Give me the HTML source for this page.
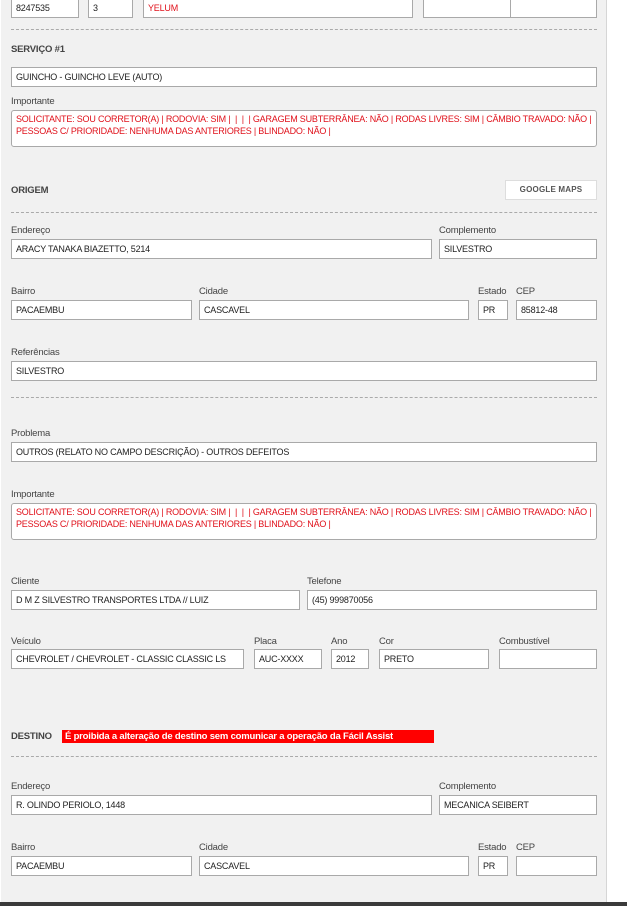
<!DOCTYPE html>
<html><head><meta charset="utf-8"><style>
*{margin:0;padding:0;box-sizing:border-box}
body{width:627px;height:906px;background:#fff;position:relative;overflow:hidden;font-family:"Liberation Sans",Arial,sans-serif;font-size:9px;color:#333;letter-spacing:-0.2px}
.panel{position:absolute;left:1px;top:0;width:606px;height:902px;background:#f1f1f1;border-right:1px solid #d6d6d6}
.bar{position:absolute;left:0;top:902px;width:627px;height:4px;background:#3a3a3a}
.i{position:absolute;height:20px;background:#fff;border:1px solid #a9a9a9;padding-left:4px;line-height:18px;white-space:nowrap;overflow:hidden;color:#222}
.l{position:absolute;color:#444;white-space:nowrap;font-size:9.5px;margin-top:1px}
.h{position:absolute;font-weight:bold;color:#444;white-space:nowrap;font-size:9.5px;margin-top:1px}
.d{position:absolute;left:11px;width:586px;border-top:1px dashed #aaa;height:0}
.ta{position:absolute;left:11px;width:586px;height:37px;background:#fff;border:1px solid #a9a9a9;border-radius:3px;color:#e0101a;padding:2px 4px;line-height:12px}
.red{color:#e0101a}
</style></head><body>
<div class="panel"></div>
<div class="i" style="left:11px;top:-2px;width:68px">8247535</div>
<div class="i" style="left:88px;top:-2px;width:45px">3</div>
<div class="i red" style="left:143px;top:-2px;width:270px">YELUM</div>
<div class="i" style="left:423px;top:-2px;width:88px"></div>
<div class="i" style="left:510px;top:-2px;width:87px"></div>
<div class="d" style="top:29px"></div>
<div class="h" style="left:11px;top:43px">SERVIÇO #1</div>
<div class="i" style="left:11px;top:67px;width:586px">GUINCHO - GUINCHO LEVE (AUTO)</div>
<div class="l" style="left:11px;top:95px">Importante</div>
<div class="ta" style="top:110px">SOLICITANTE: SOU CORRETOR(A) | RODOVIA: SIM | &nbsp;| &nbsp;| &nbsp;| GARAGEM SUBTERRÂNEA: NÃO | RODAS LIVRES: SIM | CÂMBIO TRAVADO: NÃO | PESSOAS C/ PRIORIDADE: NENHUMA DAS ANTERIORES | BLINDADO: NÃO |</div>
<div class="h" style="left:11px;top:184px">ORIGEM</div>
<div style="position:absolute;left:505px;top:180px;width:92px;height:20px;background:#fff;border:1px solid #ddd;font-weight:bold;font-size:8px;color:#555;text-align:center;line-height:18px;letter-spacing:0.2px">GOOGLE MAPS</div>
<div class="d" style="top:212px"></div>
<div class="l" style="left:11px;top:224px">Endereço</div>
<div class="l" style="left:439px;top:224px">Complemento</div>
<div class="i" style="left:11px;top:239px;width:421px">ARACY TANAKA BIAZETTO, 5214</div>
<div class="i" style="left:439px;top:239px;width:158px">SILVESTRO</div>
<div class="l" style="left:11px;top:285px">Bairro</div>
<div class="l" style="left:199px;top:285px">Cidade</div>
<div class="l" style="left:478px;top:285px">Estado</div>
<div class="l" style="left:516px;top:285px">CEP</div>
<div class="i" style="left:11px;top:300px;width:181px">PACAEMBU</div>
<div class="i" style="left:199px;top:300px;width:270px">CASCAVEL</div>
<div class="i" style="left:478px;top:300px;width:30px">PR</div>
<div class="i" style="left:516px;top:300px;width:81px">85812-48</div>
<div class="l" style="left:11px;top:346px">Referências</div>
<div class="i" style="left:11px;top:361px;width:586px">SILVESTRO</div>
<div class="d" style="top:397px"></div>
<div class="l" style="left:11px;top:427px">Problema</div>
<div class="i" style="left:11px;top:442px;width:586px">OUTROS (RELATO NO CAMPO DESCRIÇÃO) - OUTROS DEFEITOS</div>
<div class="l" style="left:11px;top:488px">Importante</div>
<div class="ta" style="top:503px">SOLICITANTE: SOU CORRETOR(A) | RODOVIA: SIM | &nbsp;| &nbsp;| &nbsp;| GARAGEM SUBTERRÂNEA: NÃO | RODAS LIVRES: SIM | CÂMBIO TRAVADO: NÃO | PESSOAS C/ PRIORIDADE: NENHUMA DAS ANTERIORES | BLINDADO: NÃO |</div>
<div class="l" style="left:11px;top:575px">Cliente</div>
<div class="l" style="left:307px;top:575px">Telefone</div>
<div class="i" style="left:11px;top:590px;width:289px">D M Z SILVESTRO TRANSPORTES LTDA // LUIZ</div>
<div class="i" style="left:307px;top:590px;width:290px">(45) 999870056</div>
<div class="l" style="left:11px;top:635px">Veículo</div>
<div class="l" style="left:254px;top:635px">Placa</div>
<div class="l" style="left:331px;top:635px">Ano</div>
<div class="l" style="left:379px;top:635px">Cor</div>
<div class="l" style="left:499px;top:635px">Combustível</div>
<div class="i" style="left:11px;top:649px;width:233px">CHEVROLET / CHEVROLET - CLASSIC CLASSIC LS</div>
<div class="i" style="left:254px;top:649px;width:68px">AUC-XXXX</div>
<div class="i" style="left:331px;top:649px;width:38px">2012</div>
<div class="i" style="left:379px;top:649px;width:110px">PRETO</div>
<div class="i" style="left:499px;top:649px;width:98px"></div>
<div class="h" style="left:11px;top:730px">DESTINO</div>
<div style="position:absolute;left:62px;top:730px;width:372px;height:13px;background:#ff0000;color:#fff;font-weight:bold;line-height:13px;padding-left:3px;white-space:nowrap;font-size:9.5px">É proibida a alteração de destino sem comunicar a operação da Fácil Assist</div>
<div class="d" style="top:756px"></div>
<div class="l" style="left:11px;top:780px">Endereço</div>
<div class="l" style="left:439px;top:780px">Complemento</div>
<div class="i" style="left:11px;top:795px;width:421px">R. OLINDO PERIOLO, 1448</div>
<div class="i" style="left:439px;top:795px;width:158px">MECANICA SEIBERT</div>
<div class="l" style="left:11px;top:841px">Bairro</div>
<div class="l" style="left:199px;top:841px">Cidade</div>
<div class="l" style="left:478px;top:841px">Estado</div>
<div class="l" style="left:516px;top:841px">CEP</div>
<div class="i" style="left:11px;top:856px;width:181px">PACAEMBU</div>
<div class="i" style="left:199px;top:856px;width:270px">CASCAVEL</div>
<div class="i" style="left:478px;top:856px;width:30px">PR</div>
<div class="i" style="left:516px;top:856px;width:81px"></div>
<div class="bar"></div>
</body></html>
